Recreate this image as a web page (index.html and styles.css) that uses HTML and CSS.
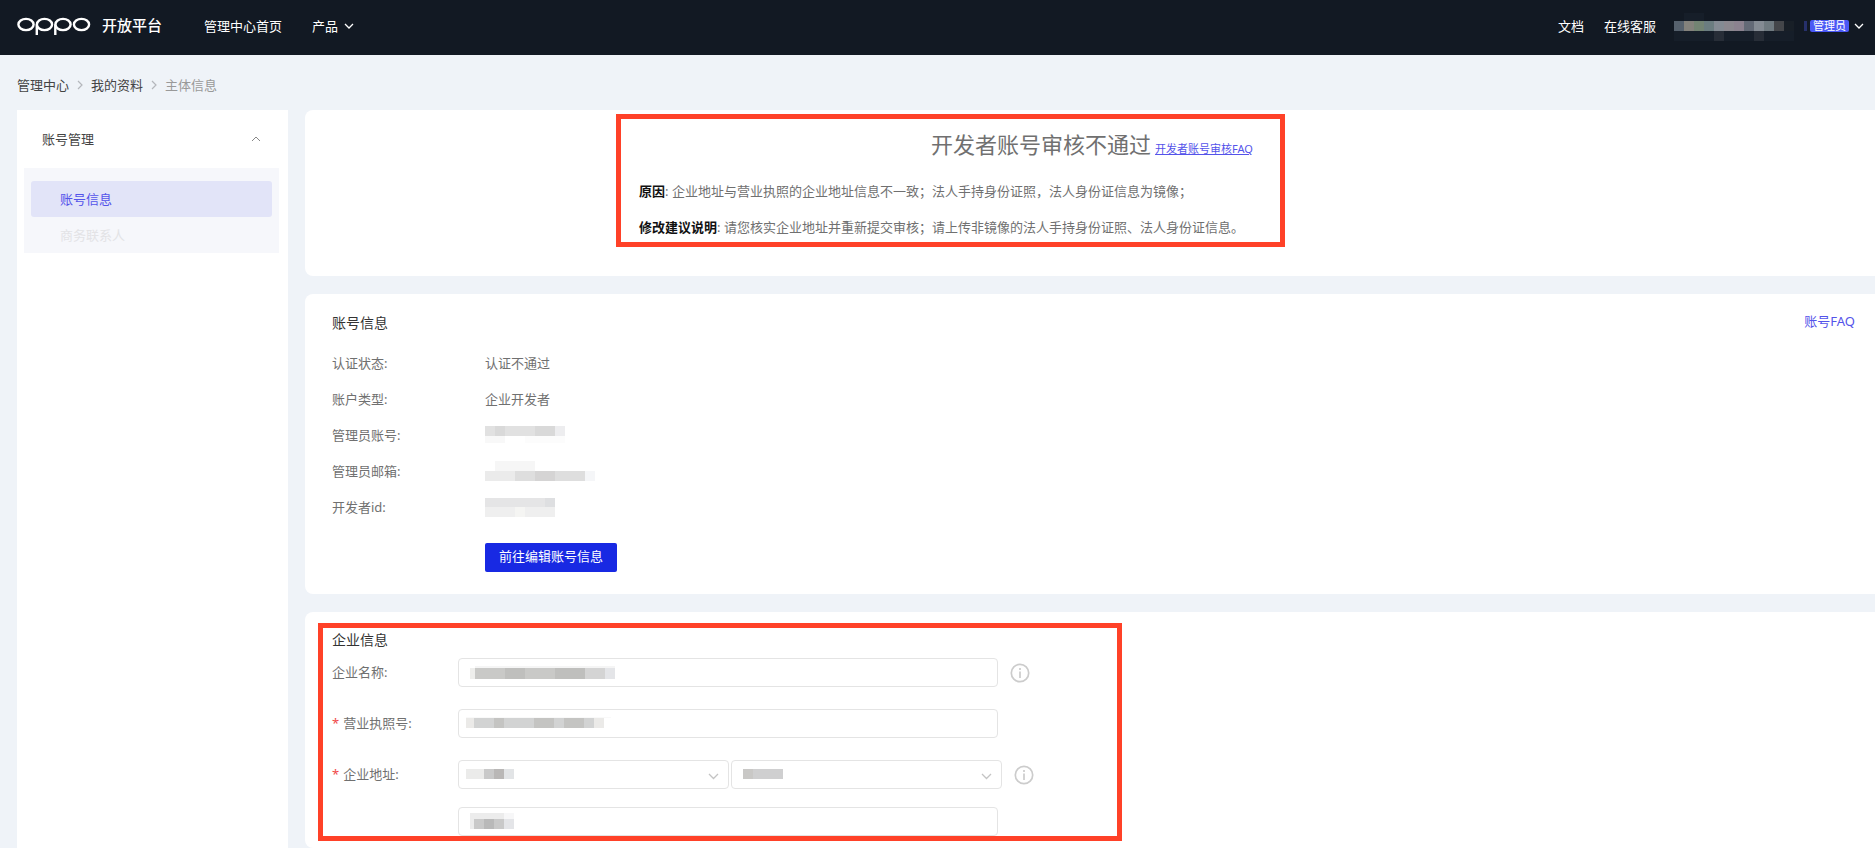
FILE: index.html
```html
<!DOCTYPE html>
<html lang="zh-CN">
<head>
<meta charset="utf-8">
<title>OPPO 开放平台</title>
<link rel="stylesheet" href="styles.css">
</head>
<body>
<header class="topbar">
  <a class="brand" href="#">
    <svg class="logo" width="74" height="18" viewBox="0 0 74 18" fill="none" stroke="#fff" stroke-width="2.400" role="img" aria-label="OPPO">
      <ellipse cx="9" cy="7.500" rx="7.600" ry="5.600"/>
      <ellipse cx="27.500" cy="7.500" rx="7.600" ry="5.600"/>
      <ellipse cx="46" cy="7.500" rx="7.600" ry="5.600"/>
      <ellipse cx="64.500" cy="7.500" rx="7.600" ry="5.600"/>
      <path d="M19.800 7.500V18M38.300 7.500V18"/>
    </svg>
    <span class="brand-name">开放平台</span>
  </a>
  <nav class="nav">
    <a href="#">管理中心首页</a>
    <a href="#" class="has-arrow">产品
      <svg width="10" height="6" viewBox="0 0 10 6" fill="none" stroke="#fff" stroke-width="1.300"><path d="M1 1l4 4 4-4"/></svg>
    </a>
  </nav>
  <div class="tools">
    <a href="#">文档</a>
    <a href="#">在线客服</a>
    <div class="user">
      <svg width="134" height="30" viewBox="0 0 134 30" shape-rendering="crispEdges" aria-hidden="true">
        <path fill="#161e29" d="M10 2h20v8h-20zM0 20h120v10H0z"/>
        <path fill="#56616d" d="M0 10h10v10H0z"/><path fill="#84827c" d="M10 10h10v10H10z"/>
        <path fill="#738473" d="M20 10h10v10H20z"/><path fill="#6b7d80" d="M30 10h10v10H30z"/>
        <path fill="#848b93" d="M40 10h10v10H40z"/><path fill="#8b888f" d="M50 10h10v10H50z"/>
        <path fill="#8b828f" d="M60 10h10v10H60z"/><path fill="#636a76" d="M70 10h10v10H70z"/>
        <path fill="#848b93" d="M80 10h10v10H80z"/><path fill="#6f7a80" d="M90 10h10v10H90z"/>
        <path fill="#44464a" d="M100 10h10v10h-10z"/><path fill="#181f27" d="M110 10h10v10h-10z"/>
        <path fill="#272d37" d="M40 20h10v10H40zM80 20h10v10H80z"/>
        <path fill="#26306b" d="M130 10h3v10h-3z"/>
      </svg>
      <span class="badge">管理员</span>
      <svg width="10" height="6" viewBox="0 0 10 6" fill="none" stroke="#fff" stroke-width="1.300"><path d="M1 1l4 4 4-4"/></svg>
    </div>
  </div>
</header>

<nav class="crumbs" aria-label="breadcrumb">
  <a href="#">管理中心</a>
  <svg width="6" height="10" viewBox="0 0 6 10" fill="none" stroke="#b4b7bc" stroke-width="1.200"><path d="M1 1l4 4-4 4"/></svg>
  <a href="#">我的资料</a>
  <svg width="6" height="10" viewBox="0 0 6 10" fill="none" stroke="#b4b7bc" stroke-width="1.200"><path d="M1 1l4 4-4 4"/></svg>
  <span class="current">主体信息</span>
</nav>

<div class="layout">
  <aside class="sidebar">
    <button class="group" type="button">账号管理
      <svg width="10" height="6" viewBox="0 0 10 6" fill="none" stroke="#888"><path d="M1 5l4-4 4 4"/></svg>
    </button>
    <div class="submenu">
      <a class="item active" href="#">账号信息</a>
      <a class="item disabled" href="#">商务联系人</a>
    </div>
  </aside>

  <main class="content">
    <section class="card result">
      <div class="result-title">
        <h1>开发者账号审核不通过</h1>
        <a href="#">开发者账号审核FAQ</a>
      </div>
      <div class="reasons">
        <p><strong>原因</strong>: 企业地址与营业执照的企业地址信息不一致；法人手持身份证照，法人身份证信息为镜像；</p>
        <p><strong>修改建议说明</strong>: 请您核实企业地址并重新提交审核；请上传非镜像的法人手持身份证照、法人身份证信息。</p>
        <div class="mark mark-result"></div>
      </div>
    </section>

    <section class="card account">
      <div class="card-head">
        <h2>账号信息</h2>
        <a href="#">账号FAQ</a>
      </div>
      <dl class="facts">
        <dt>认证状态:</dt><dd>认证不通过</dd>
        <dt>账户类型:</dt><dd>企业开发者</dd>
        <dt>管理员账号:</dt>
        <dd><svg class="mosaic" width="80" height="18" viewBox="0 0 80 18" shape-rendering="crispEdges" aria-hidden="true">
          <path fill="#e1e1e1" d="M0 0h80v10H0z"/><path fill="#d9d9d9" d="M10 0h10v10H10zM50 0h20v10H50z"/><path fill="#ededef" d="M70 0h10v10H70z"/><path fill="#f8f8f8" d="M0 10h20v7H0z"/><path fill="#fcfcfc" d="M40 10h40v7H40z"/>
        </svg></dd>
        <dt>管理员邮箱:</dt>
        <dd><svg class="mosaic" width="110" height="20" viewBox="0 0 110 20" shape-rendering="crispEdges" aria-hidden="true">
          <path fill="#f6f6f6" d="M10 0h40v10H10z"/><path fill="#ebebeb" d="M0 10h30v10H0z"/><path fill="#dedede" d="M30 10h70v10H30z"/><path fill="#d5d4d4" d="M50 10h20v10H50z"/><path fill="#f5f6f8" d="M100 10h10v10h-10z"/>
        </svg></dd>
        <dt>开发者id:</dt>
        <dd><svg class="mosaic" width="70" height="19" viewBox="0 0 70 19" shape-rendering="crispEdges" aria-hidden="true">
          <path fill="#e5e5e6" d="M0 0h70v9H0z"/><path fill="#dedfe1" d="M60 0h10v9H60z"/><path fill="#efefef" d="M0 9h70v10H0z"/><path fill="#f5f5f3" d="M30 9h10v10H30z"/>
        </svg></dd>
      </dl>
      <button class="primary" type="button">前往编辑账号信息</button>
    </section>

    <section class="card company">
      <h2>企业信息</h2>
      <form class="form">
        <div class="row">
          <label for="name">企业名称:</label>
          <div class="field">
            <input id="name" type="text">
            <svg class="mask mask-name" width="145" height="13" viewBox="0 0 145 13" shape-rendering="crispEdges" aria-hidden="true">
              <path fill="#f5f5f5" d="M5 0h140v2H5z"/><path fill="#eeeeec" d="M0 2h5v11H0z"/><path fill="#c9c9c7" d="M5 2h110v11H5z"/><path fill="#bfbfbd" d="M35 2h20v11H35zM85 2h30v11H85z"/><path fill="#d4d4d4" d="M115 2h20v11h-20z"/><path fill="#e4e5e8" d="M135 2h10v11h-10z"/>
            </svg>
          </div>
          <svg class="info" width="20" height="20" viewBox="0 0 20 20" fill="none" stroke="#ccc" stroke-width="1.700"><circle cx="10" cy="10" r="8.700"/><path d="M10 8.500v6.500M10 5v2"/></svg>
        </div>
        <div class="row">
          <label for="license"><i>*</i>营业执照号:</label>
          <div class="field">
            <input id="license" type="text">
            <svg class="mask mask-license" width="145" height="12" viewBox="0 0 145 12" shape-rendering="crispEdges" aria-hidden="true">
              <path fill="#f9f9f9" d="M0 0h145v1H0z"/><path fill="#ebeae8" d="M0 1h8v10H0zM128 1h10v10h-10z"/><path fill="#d2d3d3" d="M8 1h120v10H8z"/><path fill="#c4c4c2" d="M28 1h10v10H28zM68 1h20v10H68zM98 1h20v10H98z"/>
            </svg>
          </div>
        </div>
        <div class="row address">
          <label for="province"><i>*</i>企业地址:</label>
          <div class="pair">
            <div class="field">
              <select id="province"><option></option></select>
              <svg class="mask mask-license" width="48" height="12" viewBox="0 0 48 12" shape-rendering="crispEdges" aria-hidden="true">
                <path fill="#ebebea" d="M0 1h18v10H0z"/><path fill="#c9c9c9" d="M18 1h20v10H18z"/><path fill="#b9b7b6" d="M28 1h10v10H28z"/><path fill="#e2e4e6" d="M38 1h10v10H38z"/>
              </svg>
              <svg class="caret" width="11" height="7" viewBox="0 0 11 7" fill="none" stroke="#c4c4c4" stroke-width="1.300"><path d="M1 1l4.500 4.500L10 1"/></svg>
            </div>
            <div class="field">
              <select id="city" aria-label="城市"><option></option></select>
              <svg class="mask mask-name" width="40" height="12" viewBox="0 0 40 12" shape-rendering="crispEdges" aria-hidden="true">
                <path fill="#c9c8c6" d="M0 1h10v10H0z"/><path fill="#cfcfd0" d="M10 1h30v10H10z"/>
              </svg>
              <svg class="caret" width="11" height="7" viewBox="0 0 11 7" fill="none" stroke="#c4c4c4" stroke-width="1.300"><path d="M1 1l4.500 4.500L10 1"/></svg>
            </div>
          </div>
          <svg class="info" width="20" height="20" viewBox="0 0 20 20" fill="none" stroke="#ccc" stroke-width="1.700"><circle cx="10" cy="10" r="8.700"/><path d="M10 8.500v6.500M10 5v2"/></svg>
        </div>
        <div class="row">
          <span></span>
          <div class="field">
            <input id="street" type="text" aria-label="详细地址">
            <svg class="mask mask-street" width="44" height="16" viewBox="0 0 44 16" shape-rendering="crispEdges" aria-hidden="true">
              <path fill="#ececec" d="M0 0h34v16H0z"/><path fill="#f7f7f8" d="M34 0h10v6H34z"/><path fill="#c9c9c9" d="M4 6h30v10H4z"/><path fill="#b9b9b9" d="M14 6h10v10H14z"/><path fill="#e4e5e8" d="M34 6h10v10H34z"/>
            </svg>
          </div>
        </div>
      </form>
      <div class="mark mark-company"></div>
    </section>
  </main>
</div>
</body>
</html>
```

FILE: styles.css
```css
* { box-sizing: border-box; }

body {
  margin: 0;
  min-height: 100vh;
  display: flex;
  flex-direction: column;
  background: #eff3f8;
  color: #707070;
  font: 13px/20px "Noto Sans", "Noto Sans CJK SC", sans-serif;
}

a { color: inherit; text-decoration: none; }
svg { display: block; flex: none; }
h1, h2, p, dl, dd { margin: 0; font-weight: 400; }
button, input, select { font: inherit; }

.topbar {
  display: flex;
  align-items: center;
  height: 55px;
  padding: 0 11px 4px 17px;
  background: #121923;
  color: #fff;
}
.brand { display: flex; align-items: center; gap: 11px; padding-bottom: 2px; }
.brand .logo { margin-top: 3px; }
.brand-name { font-size: 15px; font-weight: 500; }
.nav { display: flex; gap: 30px; margin-left: 42px; }
.has-arrow { display: flex; align-items: center; gap: 6px; }
.tools { display: flex; align-items: center; gap: 20px; margin-left: auto; }
.tools > a + a { margin-right: -2px; }
.user { display: flex; align-items: center; }
.badge {
  margin: 0 5px 0 2px;
  padding: 0 3px;
  border-radius: 2px;
  background: #4a58f5;
  font-size: 11px;
  line-height: 12px;
}

.crumbs {
  display: flex;
  align-items: center;
  gap: 8px;
  padding: 20px 17px 15px;
  color: #444;
}
.current { color: #999; }

.layout { display: flex; flex: 1; gap: 17px; padding-left: 17px; }

.sidebar { flex: none; width: 271px; padding: 0 9px 0 7px; background: #fff; }
.group {
  display: flex;
  align-items: center;
  justify-content: space-between;
  width: 100%;
  height: 58px;
  padding: 0 18px;
  border: 0;
  background: none;
  color: #444;
}
.submenu { padding: 13px 7px 0; background: #f6f7fb; }
.item {
  display: block;
  height: 36px;
  padding-left: 29px;
  border-radius: 3px;
  line-height: 36px;
}
.active { background: #e2e4f8; color: #5453ea; }
.disabled { color: #e3e3e6; }

.content { display: flex; flex: 1; flex-direction: column; gap: 18px; min-width: 0; }
.card { position: relative; padding: 0 20px 0 27px; border-radius: 8px 0 0 8px; background: #fff; }

.result { padding: 18px 16px 31px 20px; }
.result-title { display: flex; align-items: baseline; justify-content: center; gap: 4px; }
.result-title h1 { font-size: 22px; line-height: 32px; }
.result-title a { color: #5453ea; font-size: 11px; text-decoration: underline; }
.reasons { position: relative; max-width: 906px; margin: 13px auto 0; }
.reasons p { line-height: 36px; }
.reasons strong { color: #111; }

.mark { position: absolute; border: 5px solid #ff4128; pointer-events: none; }
.mark-result { top: -59px; left: -23px; width: 669px; height: 133px; }
.mark-company { top: 11px; left: 13px; width: 804px; height: 218px; }

.card-head { display: flex; justify-content: space-between; padding-top: 17px; }
.card-head a { color: #5453ea; }
h2 { color: #333; font-size: 14px; line-height: 24px; }
.facts { display: grid; grid-template-columns: 153px 1fr; grid-auto-rows: 36px; margin-top: 10px; line-height: 36px; }
.facts dd { display: flex; align-items: center; }
.primary {
  display: block;
  height: 29px;
  margin: 18px 0 22px 153px;
  padding: 0 14px 3px;
  border: 0;
  border-radius: 2px;
  background: #1829e3;
  color: #fff;
}

.company { flex: 1; padding-top: 16px; }
.form { margin-top: 6px; }
.row {
  display: grid;
  grid-template-columns: 126px 540px 20px;
  align-items: center;
  margin-bottom: 22px;
}
.row label { padding-bottom: 2px; }
.row .info { margin-left: 12px; }
.address { grid-template-columns: 126px 544px 20px; margin-bottom: 18px; }
.row:last-child { margin-bottom: 0; }
.row i { margin-right: 4px; color: #f04848; font-style: normal; }
.pair { display: grid; grid-template-columns: 1fr 1fr; gap: 2px; }
.field { position: relative; }
.field input, .field select {
  display: block;
  width: 100%;
  height: 29px;
  padding: 0 10px;
  border: 1px solid #e4e4e4;
  border-radius: 4px;
  background: #fff;
  appearance: none;
}
.mask { position: absolute; top: 8px; }
.mask-name { left: 12px; }
.mask-license { left: 8px; }
.mask-street { top: 6px; left: 12px; }
.caret { position: absolute; top: 13px; right: 10px; }
```
